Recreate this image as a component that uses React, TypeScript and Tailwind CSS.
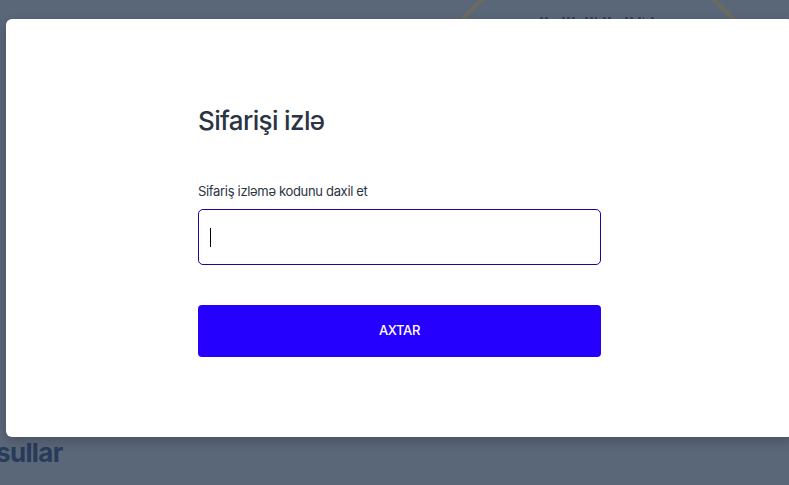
import React from "react";

function PageBehind() {
  return (
    <div className="flex h-full flex-col justify-between overflow-hidden">
      <div className="flex justify-end pr-2">
        <svg className="h-80 w-[364px]" viewBox="0 0 364 320" aria-hidden="true">
          <circle cx="181" cy="135" r="178" fill="#596779" stroke="#6d6a60" strokeWidth="4" />
          <g stroke="#36445a" strokeWidth="2" strokeDasharray="3 2">
            <path d="M123 18h9M145 18h13M168 18h12M186 18h9M208 18h9M221 18h6M234 18h3" />
          </g>
        </svg>
      </div>
      <h2 className="-ml-1 pb-4 text-[26px] leading-8 font-bold tracking-tight text-[#283c5a]">
        sullar
      </h2>
    </div>
  );
}

export default function App() {
  return (
    <div className="relative h-screen overflow-hidden bg-[#5a6779] font-['Inter','Liberation_Sans',sans-serif] text-[#2a3442]">
      <PageBehind />
      <div className="absolute inset-0 flex items-start pt-[19px] pl-1.5">
        <main
          role="dialog"
          aria-labelledby="track-title"
          className="-mr-1 flex-1 rounded-md bg-white px-48 pt-20 pb-20 shadow-[0_4px_12px_rgba(0,0,0,0.2)]"
        >
          <form onSubmit={(e) => e.preventDefault()} className="flex flex-col">
            <h1 id="track-title" className="text-[26px] leading-11 font-medium tracking-tight">
              Sifarişi izlə
            </h1>
            <label htmlFor="code" className="mt-10 text-[13px] leading-4 tracking-tight">
              Sifariş izləmə kodunu daxil et
            </label>
            <div className="relative mt-2.5">
              <input
                id="code"
                type="text"
                autoFocus
                className="block h-14 w-full rounded-[5px] border border-[#26009c] px-3 text-base text-black caret-transparent outline-none"
              />
              <span
                aria-hidden="true"
                className="pointer-events-none absolute inset-y-0 left-3 my-auto h-[19px] border-l border-black"
              />
            </div>
            <button
              type="submit"
              className="mt-10 h-13 w-full rounded bg-[#2600ff] text-[13px] font-medium tracking-tight text-white"
            >
              AXTAR
            </button>
          </form>
        </main>
      </div>
    </div>
  );
}
